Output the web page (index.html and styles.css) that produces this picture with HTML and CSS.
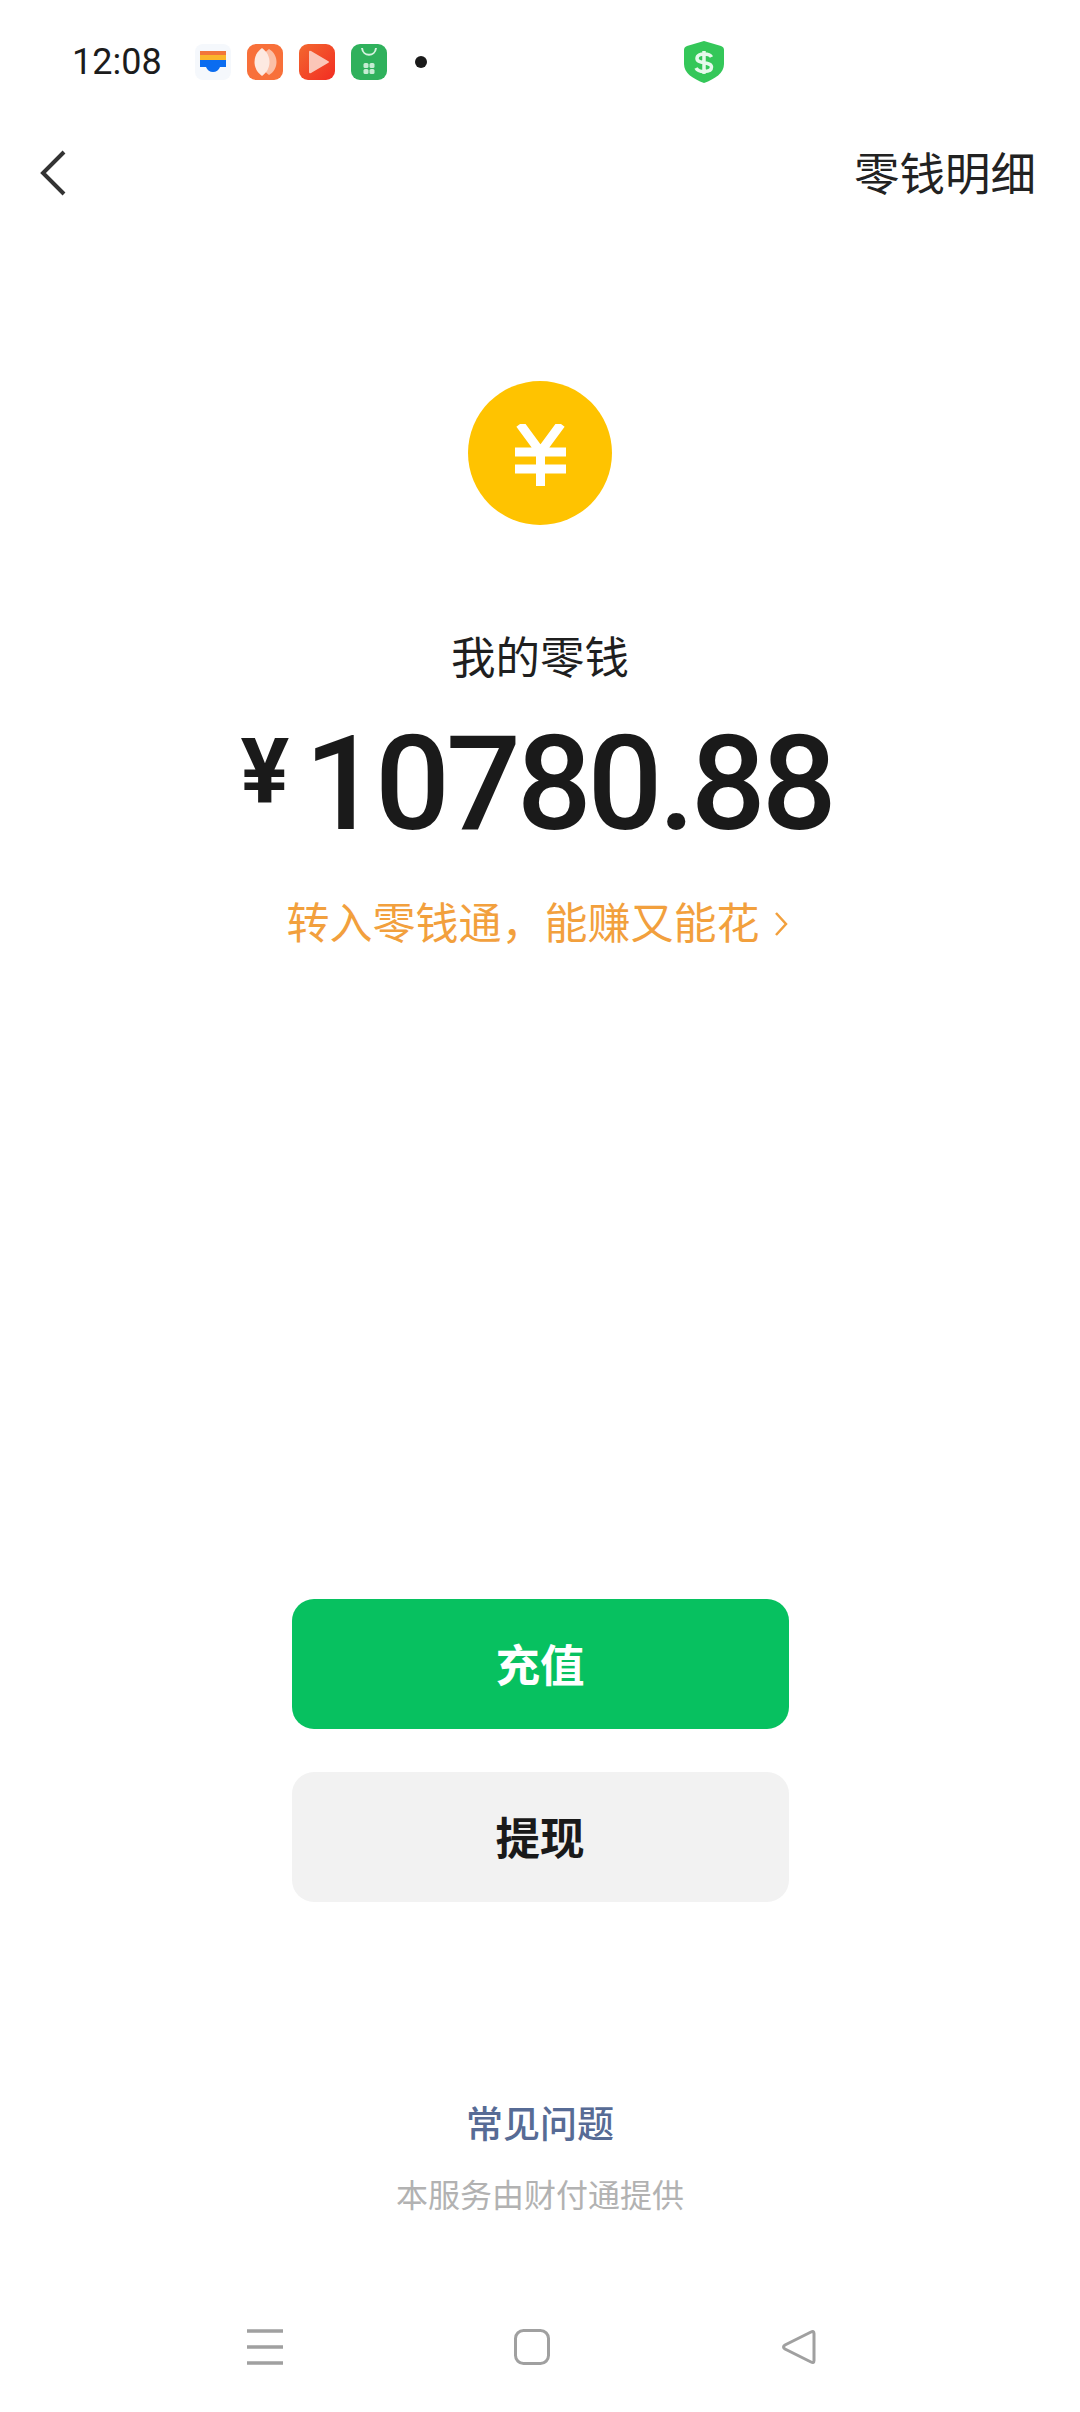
FILE: index.html
```html
<!DOCTYPE html>
<html lang="zh-CN">
<head>
  <meta charset="UTF-8">
  <meta name="viewport" content="width=device-width, initial-scale=1.0">
  <title>我的零钱</title>
  <link rel="stylesheet" href="styles.css">
</head>
<body>
  <!-- Status bar -->
  <div class="status-bar">
    <span class="time">12:08</span>
    <div class="app-icons">
      <svg class="app-icon" viewBox="0 0 36 36">
        <rect width="36" height="36" rx="8" fill="#f5f8fc"/>
        <rect x="5" y="7" width="26" height="4" fill="#f2763a"/>
        <rect x="5" y="11" width="26" height="5" fill="#fbb62c"/>
        <path d="M5 16h26v7h-6c-1 3-4 5-7 5s-6-2-7-5H5z" fill="#0a6cf0"/>
      </svg>
      <svg class="app-icon" viewBox="0 0 36 36">
        <rect width="36" height="36" rx="9" fill="#f8703a"/>
        <path d="M22 5c10 6 10 20 0 26-9-6-9-20 0-26z" fill="#fbbfa6"/>
        <path d="M15 4c10 7 10 21 0 28C5 25 5 11 15 4z" fill="#fde9e1"/>
      </svg>
      <svg class="app-icon" viewBox="0 0 36 36">
        <defs>
          <linearGradient id="playBg" x1="0" y1="0" x2="1" y2="1">
            <stop offset="0" stop-color="#f3682f"/>
            <stop offset="1" stop-color="#f22c22"/>
          </linearGradient>
        </defs>
        <rect width="36" height="36" rx="9" fill="url(#playBg)"/>
        <path d="M10 8q0-2 2-1l17 10q2 1 0 2L12 29q-2 1-2-1z" fill="#fbc6b8"/>
      </svg>
      <svg class="app-icon" viewBox="0 0 36 36">
        <rect width="36" height="36" rx="9" fill="#2fb15c"/>
        <path d="M11 4c1 9 13 9 14 0" fill="none" stroke="#d5f2df" stroke-width="2"/>
        <rect x="12.500" y="19" width="5" height="5" rx="1.500" fill="#c6ecd3"/>
        <rect x="18.500" y="19" width="5" height="5" rx="1.500" fill="#c6ecd3"/>
        <rect x="12.500" y="25" width="5" height="5" rx="1.500" fill="#c6ecd3"/>
        <rect x="18.500" y="25" width="5" height="5" rx="1.500" fill="#c6ecd3"/>
      </svg>
      <span class="status-dot"></span>
    </div>
    <svg class="shield" viewBox="0 0 40 42">
      <path d="M20 0l17 5q3 1 3 4v14c0 9-9 15-20 19C9 38 0 32 0 23V9q0-3 3-4z" fill="#34c759"/>
      <path d="M27.500 16c-1-2-4-3-7.500-3s-7 1.500-7 4.500c0 6 14.500 2.500 14.500 8.500 0 3-3 4.500-7.500 4.500s-7-1.500-8-3.500M20 10v23" fill="none" stroke="#e6f9ec" stroke-width="3.500"/>
    </svg>
  </div>

  <!-- Top bar -->
  <div class="top-bar">
    <svg class="back" viewBox="0 0 26 46">
      <path d="M24 2L3 23l21 21" fill="none" stroke="#333" stroke-width="4"/>
    </svg>
    <span class="top-title">零钱明细</span>
  </div>

  <!-- Balance -->
  <div class="balance">
    <div class="coin">
      <svg viewBox="0 0 51 62" class="coin-yen">
        <path d="M5 0l20.500 28L46 0M25.500 28v34M0 28h51M0 45h51" fill="none" stroke="#fff" stroke-width="9"/>
      </svg>
    </div>
    <div class="balance-label">我的零钱</div>
    <div class="amount"><span class="yen">¥</span><span class="digits">10780.88</span></div>
    <div class="promo">
      <span>转入零钱通，能赚又能花</span>
      <svg class="promo-arrow" viewBox="0 0 14 26">
        <path d="M2 2l10 11L2 24" fill="none" stroke="#f2a03d" stroke-width="2.500"/>
      </svg>
    </div>
  </div>

  <!-- Buttons -->
  <div class="actions">
    <button class="btn btn-primary">充值</button>
    <button class="btn btn-grey">提现</button>
  </div>

  <!-- Footer -->
  <div class="footer">
    <div class="faq">常见问题</div>
    <div class="provider">本服务由财付通提供</div>
  </div>

  <!-- Navigation bar -->
  <div class="nav-bar">
    <svg class="nav-menu" viewBox="0 0 36 36">
      <path d="M0 2h36M0 18h36M0 34h36" stroke="#a0a0a0" stroke-width="3.500"/>
    </svg>
    <svg class="nav-home" viewBox="0 0 36 36">
      <rect x="1.500" y="1.500" width="33" height="33" rx="8" fill="none" stroke="#a0a0a0" stroke-width="3"/>
    </svg>
    <svg class="nav-back" viewBox="0 0 36 36">
      <path d="M33 4.500v27q0 3-3 1.500L4 20q-3-2 0-4L30 3q3-1.500 3 1.500z" fill="none" stroke="#a0a0a0" stroke-width="3"/>
    </svg>
  </div>
</body>
</html>
```

FILE: styles.css
```css
/* Global Reset */
* {
  margin: 0;
  padding: 0;
  box-sizing: border-box;
}

body {
  width: 1080px;
  height: 2412px;
  background: #fff;
  color: #1a1a1a;
  font-family: Roboto, "Noto Sans CJK SC", sans-serif;
  overflow: hidden;
}

/* Status bar */
.status-bar {
  display: flex;
  align-items: center;
  height: 124px;
  padding-left: 72px;
}

.time {
  width: 123px;
  font-size: 36px;
  color: #1c1c1c;
}

.app-icons {
  display: flex;
  align-items: center;
  gap: 16px;
  width: 489px;
}

.app-icon {
  width: 36px;
  height: 36px;
}

.status-dot {
  width: 12px;
  height: 12px;
  margin-left: 12px;
  border-radius: 50%;
  background: #1a1a1a;
}

.shield {
  width: 40px;
  height: 42px;
}

/* Top bar */
.top-bar {
  display: flex;
  align-items: center;
  justify-content: space-between;
  height: 98px;
  padding: 0 44px 0 40px;
}

.back {
  width: 26px;
  height: 46px;
}

.top-title {
  margin-bottom: 4px;
  font-size: 45.500px;
  color: #222;
}

/* Balance */
.balance {
  display: flex;
  flex-direction: column;
  align-items: center;
  padding-top: 159px;
}

.coin {
  display: flex;
  align-items: center;
  justify-content: center;
  width: 144px;
  height: 144px;
  border-radius: 50%;
  background: #ffc300;
}

.coin-yen {
  width: 51px;
  height: 62px;
  margin-top: 4px;
}

.balance-label {
  margin-top: 104px;
  font-size: 44.500px;
  line-height: 60px;
  color: #1f1f1f;
}

.amount {
  display: flex;
  align-items: flex-start;
  height: 142px;
  margin-top: 24px;
  padding-right: 7px;
  font-weight: 500;
  color: #1a1a1a;
}

.yen {
  margin-right: 15px;
  font-size: 91px;
  font-weight: 700;
  line-height: 118px;
}

.digits {
  font-size: 132px;
  letter-spacing: -4.200px;
  line-height: 142px;
}

.promo {
  display: flex;
  align-items: center;
  gap: 14px;
  margin-top: 39px;
  padding-right: 6px;
  font-size: 43px;
  line-height: 60px;
  color: #f2a03d;
}

.promo-arrow {
  width: 14px;
  height: 26px;
}

/* Buttons */
.actions {
  display: flex;
  flex-direction: column;
  align-items: center;
  gap: 43px;
  margin-top: 645px;
}

.btn {
  width: 497px;
  height: 130px;
  padding-bottom: 4px;
  border: none;
  border-radius: 22px;
  font-family: inherit;
  font-size: 44.500px;
  font-weight: 700;
}

.btn-primary {
  background: #07c160;
  color: #fff;
}

.btn-grey {
  background: #f2f2f2;
  color: #1a1a1a;
}

/* Footer */
.footer {
  display: flex;
  flex-direction: column;
  align-items: center;
  margin-top: 199px;
}

.faq {
  font-size: 37px;
  font-weight: 500;
  line-height: 50px;
  color: #576b95;
}

.provider {
  margin-top: 23px;
  font-size: 32px;
  line-height: 44px;
  color: #b2b2b2;
}

/* Navigation bar */
.nav-bar {
  display: flex;
  align-items: center;
  height: 36px;
  margin-top: 111px;
  padding-left: 247px;
}

.nav-bar svg {
  width: 36px;
  height: 36px;
}

.nav-menu {
  margin-right: 231px;
}

.nav-home {
  margin-right: 231px;
}
```
